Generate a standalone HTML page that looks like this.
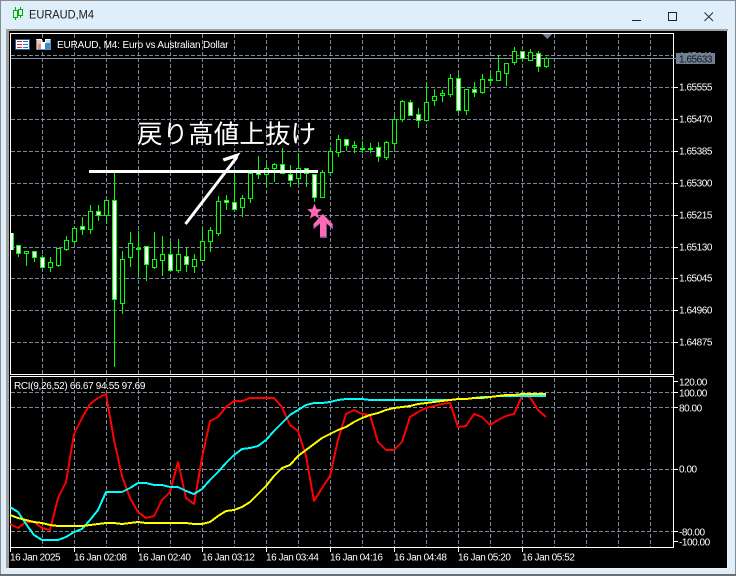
<!DOCTYPE html>
<html><head><meta charset="utf-8"><style>
html,body{margin:0;padding:0;width:736px;height:576px;overflow:hidden;background:#dfeefb}
svg{display:block;position:absolute;left:0;top:0}
text{font-family:"Liberation Sans","Noto Sans CJK JP",sans-serif;font-size:10px;letter-spacing:-.45px;fill:#fff}
</style></head><body>
<svg width="736" height="576" viewBox="0 0 736 576" xmlns="http://www.w3.org/2000/svg">
<!-- window -->
<rect width="736" height="576" fill="#dfeefb"/>
<path d="M.5 576V.5H735.5V576" fill="none" stroke="#8c8c8c"/>
<rect y="574" width="736" height="2" fill="#6e6e6e"/>
<rect x="6" y="29" width="722" height="540" fill="#a0a0a0"/>
<rect x="9" y="31" width="718" height="537" fill="#000"/>
<rect x="6" y="568" width="722" height="1" fill="#f0f0f0"/>
<rect x="727" y="31" width="1" height="538" fill="#f0f0f0"/>
<!-- title icon -->
<g shape-rendering="crispEdges" fill="none" stroke="#00b000">
<path d="M15.5 7V20M20.5 7V18"/><path d="M13.5 10.5h4v7h-4zM18.5 9.5h4v6h-4z" fill="#dfeefb"/>
</g>
<text x="29" y="18.5" style="font-size:11.7px;letter-spacing:0;fill:#1a1a1a" textLength="65" lengthAdjust="spacingAndGlyphs">EURAUD,M4</text>
<!-- window buttons -->
<g shape-rendering="crispEdges" fill="none" stroke="#222">
<path d="M632 20.5h9"/>
<rect x="668.5" y="12.5" width="8" height="8"/>
</g>
<path d="M704.5 12.5l8.5 8.5M713 12.5l-8.5 8.5" fill="none" stroke="#333" stroke-width="1.1"/>
<g shape-rendering="crispEdges">
<!-- grid -->
<g fill="none" stroke="#7a8a9a" stroke-dasharray="4 2">
<path d="M11 55.5H673M11 87.5H673M11 119.5H673M11 151.5H673M11 183.5H673M11 215.5H673M11 247.5H673M11 278.5H673M11 310.5H673M11 342.5H673"/>
<path d="M11 392.5H673M11 407.5H673M11 469.5H673M11 531.5H673"/>
<path d="M42.5 34V374M74.5 34V374M106.5 34V374M138.5 34V374M170.5 34V374M202.5 34V374M234.5 34V374M266.5 34V374M298.5 34V374M330.5 34V374M362.5 34V374M394.5 34V374M426.5 34V374M458.5 34V374M490.5 34V374M522.5 34V374M554.5 34V374M586.5 34V374M618.5 34V374M650.5 34V374"/>
<path d="M42.5 378V547M74.5 378V547M106.5 378V547M138.5 378V547M170.5 378V547M202.5 378V547M234.5 378V547M266.5 378V547M298.5 378V547M330.5 378V547M362.5 378V547M394.5 378V547M426.5 378V547M458.5 378V547M490.5 378V547M522.5 378V547M554.5 378V547M586.5 378V547M618.5 378V547M650.5 378V547"/>
</g>
<!-- bid line -->
<rect x="11" y="58" width="662" height="1" fill="#8294a6"/>
<!-- frames -->
<rect x="10.5" y="33.5" width="663" height="341" fill="none" stroke="#fff"/>
<rect x="10.5" y="376.5" width="663" height="171" fill="none" stroke="#fff"/>
<!-- ticks -->
<path d="M674 87.5h4M674 119.5h4M674 151.5h4M674 183.5h4M674 215.5h4M674 247.5h4M674 278.5h4M674 310.5h4M674 342.5h4M674 381.5h4M674 392.5h4M674 407.5h4M674 469.5h4M674 531.5h4M674 541.5h4M10.5 548v4M74.5 548v4M138.5 548v4M202.5 548v4M266.5 548v4M330.5 548v4M394.5 548v4M458.5 548v4M522.5 548v4" stroke="#fff" fill="none"/>
<path d="M542 34h10l-5 5z" fill="#708090"/>
<!-- candles -->
<path fill="none" stroke="#0f0" d="M18.5 245V257M26.5 251V266M34.5 251V262M42.5 255V267M50.5 257V272M58.5 248V267M66.5 236V251M74.5 226V244M82.5 217V235M90.5 205V234M98.5 205V221M106.5 200V223M114.5 173V367M122.5 251V314M130.5 232V267M138.5 231V277M146.5 246V281M154.5 232V269M162.5 236V276M170.5 242V272M178.5 239V273M186.5 247V272M194.5 254V273M202.5 229V260M210.5 227V252M218.5 196V236M226.5 195V210M234.5 173V209M242.5 195V217M250.5 170V203M258.5 156V179M266.5 163V187M274.5 163V182M282.5 148V174M290.5 165V187M298.5 153V184M306.5 168V187M314.5 174V202M322.5 170V197M330.5 147V173M338.5 135V157M346.5 139V151M354.5 141V153M362.5 141V153M370.5 143V153M378.5 142V162M386.5 141V160M394.5 116V149M402.5 100V122M410.5 100V116M418.5 108V128M426.5 83V120M434.5 89V106M442.5 90V102M450.5 74V97M458.5 74V113M466.5 89V115M474.5 82V97M482.5 74V94M490.5 73V84M498.5 55V80M506.5 63V86M514.5 47V65M522.5 51V61M530.5 49V60M538.5 51V72M546.5 57V68"/>
<path fill="#000" stroke="#0f0" d="M24.5 251.5h4V253.5h-4zM48.5 262.5h4V267.5h-4zM56.5 248.5h4V265.5h-4zM64.5 240.5h4V249.5h-4zM72.5 228.5h4V241.5h-4zM88.5 211.5h4V229.5h-4zM104.5 200.5h4V215.5h-4zM120.5 259.5h4V303.5h-4zM128.5 243.5h4V257.5h-4zM152.5 259.5h4V267.5h-4zM160.5 254.5h4V260.5h-4zM176.5 254.5h4V270.5h-4zM192.5 259.5h4V266.5h-4zM200.5 241.5h4V260.5h-4zM208.5 230.5h4V241.5h-4zM216.5 201.5h4V233.5h-4zM240.5 198.5h4V207.5h-4zM248.5 173.5h4V198.5h-4zM264.5 168.5h4V174.5h-4zM272.5 164.5h4V168.5h-4zM296.5 168.5h4V178.5h-4zM320.5 172.5h4V197.5h-4zM328.5 151.5h4V172.5h-4zM336.5 139.5h4V152.5h-4zM352.5 145.5h4V147.5h-4zM384.5 142.5h4V157.5h-4zM392.5 119.5h4V143.5h-4zM400.5 101.5h4V119.5h-4zM424.5 102.5h4V120.5h-4zM432.5 96.5h4V100.5h-4zM440.5 93.5h4V95.5h-4zM448.5 78.5h4V94.5h-4zM464.5 89.5h4V110.5h-4zM480.5 79.5h4V92.5h-4zM496.5 71.5h4V80.5h-4zM504.5 63.5h4V73.5h-4zM512.5 51.5h4V62.5h-4zM528.5 52.5h4V60.5h-4zM544.5 58.5h4V66.5h-4zM136.5 248.5h4v1h-4zM360.5 148.5h4v1h-4zM368.5 148.5h4v1h-4zM488.5 79.5h4v1h-4z"/>
<path fill="#fff" stroke="#0f0" d="M16.5 245.5h4V253.5h-4zM32.5 251.5h4V257.5h-4zM40.5 257.5h4V267.5h-4zM80.5 226.5h4V229.5h-4zM96.5 211.5h4V215.5h-4zM112.5 200.5h4V299.5h-4zM144.5 246.5h4V264.5h-4zM168.5 254.5h4V270.5h-4zM184.5 256.5h4V264.5h-4zM224.5 200.5h4V202.5h-4zM232.5 202.5h4V209.5h-4zM256.5 171.5h4V174.5h-4zM280.5 164.5h4V173.5h-4zM288.5 174.5h4V180.5h-4zM304.5 168.5h4V173.5h-4zM312.5 174.5h4V197.5h-4zM344.5 139.5h4V145.5h-4zM376.5 147.5h4V156.5h-4zM408.5 102.5h4V115.5h-4zM416.5 114.5h4V120.5h-4zM456.5 78.5h4V110.5h-4zM472.5 89.5h4V92.5h-4zM520.5 51.5h4V58.5h-4zM536.5 53.5h4V66.5h-4z"/>
<rect x="11" y="233" width="2" height="17" fill="#fff"/><rect x="13" y="233" width="1" height="17" fill="#0f0"/>
<!-- white horizontal line -->
<rect x="89" y="170" width="229" height="3" fill="#fff"/>
</g>
<!-- hand arrow -->
<path d="M185.5 224L237 157" fill="none" stroke="#fff" stroke-width="3"/>
<path d="M240.500 152.500L222.500 158.500L224 161.500L233 158.500L236 160z" fill="#fff"/>
<!-- pink marks -->
<path d="M314.500 204L316.500 209L321.500 209.500L317.500 213L319 218.500L314.500 215.500L310 218.500L311.500 213L307.500 209.500L312.500 209z" fill="#ff69b4" stroke="#c05aa0" stroke-width=".4"/>
<path d="M323 214L333 224V229.500L327 224V238H320V224L313.500 229.500V224z" fill="#7a4fa0"/>
<path d="M322.500 214L332 224V228L326 223V236.500H320V223L313.500 228V224z" fill="#ff69b4"/>
<!-- chart header icons -->
<g shape-rendering="crispEdges">
<rect x="15.500" y="39.500" width="14" height="10" fill="#fff" stroke="#205f9f"/>
<path d="M17 41.500h5M17 44.500h5M17 47.500h5" stroke="#e03030"/>
<path d="M23 41.500h5M23 44.500h5M23 47.500h5" stroke="#2f74c0"/>
<path d="M36 39h6v3h3v-3h6v11H36z" fill="#fff"/>
<path d="M37 40h4v9h-4z" fill="#f7c0b0"/><path d="M45 43h5v6h-5z" fill="#3a8ad0"/><path d="M46 40h4v3h-4z" fill="#bcdcf5"/><path d="M38 44h3v5h-3z" fill="#f08a78"/>
<path d="M36.500 39.500V49.500H50.500V39.500" fill="none" stroke="#205f9f" stroke-opacity=".7"/>
</g>
<text x="57" y="48" textLength="171" lengthAdjust="spacing">EURAUD, M4:  Euro vs Australian Dollar</text>
<!-- annotation -->
<text x="137" y="143" style="font-size:25.600px;letter-spacing:0;font-family:'Noto Sans CJK JP',sans-serif">戻り高値上抜け</text>
<!-- RCI lines -->
<g fill="none" stroke-width="2" stroke-linejoin="round" shape-rendering="crispEdges">
<polyline stroke="#f00" points="10,524 18,528 26,522 34,522 42,528 50,530 58,498 66,482 74,434 82,418 90,404 98,398 106,394 114,440 122,476 130,498 138,512 146,518 154,516 162,500 170,492 178,462 186,498 194,504 202,458 210,421 218,417 226,407 234,401 242,401 250,398 258,398 266,398 274,398 282,407 290,425 298,431 306,456 314,501 322,488 330,476 338,440 346,414 354,410 362,414 370,415 378,442 386,450 394,450 402,442 410,417 418,412 426,408 434,406 442,404 450,403 458,427 466,426 474,414 482,417 490,425 498,420 506,416 514,414 522,396 530,397 538,410 546,417"/>
<polyline stroke="#0ff" points="10,507 18,512 26,524 34,535 42,540 50,540 58,540 66,537 74,532 82,529 90,520 98,510 106,492 114,492 122,492 130,488 138,483 146,483 154,485 162,485 170,487 178,487 186,491 194,494 202,489 210,480 218,472 226,463 234,455 242,449 250,448 258,446 266,440 274,431 282,423 290,415 298,410 306,405 314,403 322,403 330,402 338,400 346,399 354,399 362,399 370,400 378,400 386,400 394,400 402,400 410,400 418,400 426,400 434,400 442,400 450,400 458,399 466,399 474,398 482,397 490,397 498,396 506,396 514,396 522,396 530,396 538,396 546,396"/>
<polyline stroke="#ff0" points="10,515 18,518 26,520 34,522 42,523 50,525 58,526 66,526 74,526 82,526 90,525 98,524 106,523 114,523 122,524 130,523 138,522 146,523 154,523 162,523 170,523 178,523 186,523 194,524 202,524 210,522 218,516 226,511 234,510 242,507 250,502 258,494 266,486 274,476 282,468 290,465 298,456 306,450 314,444 322,438 330,434 338,430 346,427 354,422 362,418 370,415 378,413 386,410 394,408 402,407 410,406 418,404 426,403 434,402 442,401 450,400 458,399 466,399 474,398 482,398 490,397 498,396 506,395 514,395 522,394 530,394 538,394 546,394"/>
</g>
<text x="14" y="389" textLength="131" lengthAdjust="spacing">RCI(9,26,52) 66.67 94.55 97.69</text>
<!-- price labels -->
<text x="679" y="90.500">1.65555</text>
<text x="679" y="122.500">1.65470</text>
<text x="679" y="154.500">1.65385</text>
<text x="679" y="186.500">1.65300</text>
<text x="679" y="218.500">1.65215</text>
<text x="679" y="250.500">1.65130</text>
<text x="679" y="281.500">1.65045</text>
<text x="679" y="313.500">1.64960</text>
<text x="679" y="345.500">1.64875</text>
<text x="679" y="59.500">1.65640</text>
<rect x="676" y="53" width="39" height="11" fill="#708090" shape-rendering="crispEdges"/>
<rect x="673" y="58" width="3" height="1" fill="#8294a6" shape-rendering="crispEdges"/>
<text x="679" y="62.500" style="fill:#10161c">1.65633</text>
<!-- indicator labels -->
<text x="679" y="385.500">120.00</text>
<text x="679" y="396.500">100.00</text>
<text x="679" y="411.500">80.00</text>
<text x="679" y="472.500">0.00</text>
<text x="679" y="535.500">-80.00</text>
<text x="679" y="545.500">-100.00</text>
<!-- time labels -->
<text x="10" y="560.500">16 Jan 2025</text>
<text x="74" y="560.500">16 Jan 02:08</text>
<text x="138" y="560.500">16 Jan 02:40</text>
<text x="202" y="560.500">16 Jan 03:12</text>
<text x="266" y="560.500">16 Jan 03:44</text>
<text x="330" y="560.500">16 Jan 04:16</text>
<text x="394" y="560.500">16 Jan 04:48</text>
<text x="458" y="560.500">16 Jan 05:20</text>
<text x="522" y="560.500">16 Jan 05:52</text>
</svg>
</body></html>
